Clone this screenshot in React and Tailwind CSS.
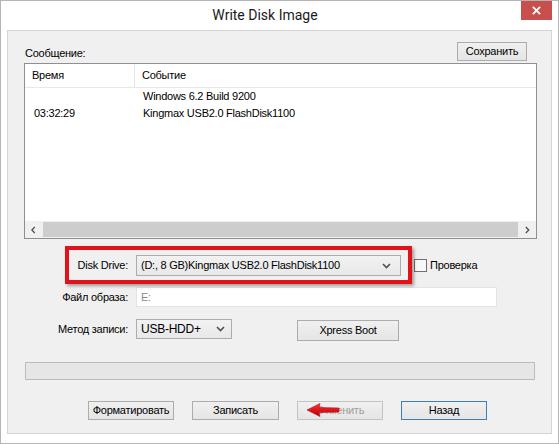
import React from "react";

const Chevron = ({ dir = "down", className = "" }) => {
  const pts = {
    down: "1,1 4.5,4.5 8,1",
    left: "4.5,1 1,4.5 4.5,8",
    right: "1,1 4.5,4.5 1,8",
  }[dir];
  const vb = dir === "down" ? "0 0 9 6" : "0 0 6 9";
  return (
    <svg viewBox={vb} className={className} fill="none">
      <polyline points={pts} stroke="#505050" strokeWidth="1.6" />
    </svg>
  );
};

const Btn = ({ children, className = "", disabled, primary }) => (
  <div
    className={
      "flex items-center justify-center h-[19px] border bg-linear-to-b from-[#f0f0f0] to-[#e5e5e5] text-[11px] " +
      (primary
        ? "border-[#3c7fb1] "
        : disabled
        ? "border-[#c3c3c3] text-[#a0a0a0] "
        : "border-[#acacac] text-black ") +
      className
    }
  >
    {children}
  </div>
);

export default function App() {
  return (
    <div className="w-[559px] h-[444px] bg-white border border-[#b5b5b5] flex flex-col pl-[6px] pr-[6px] pb-[9px] font-['Liberation_Sans',Arial,sans-serif] text-[11px] tracking-[-0.25px] text-black overflow-hidden">
      {/* Title bar */}
      <div className="h-[29px] flex shrink-0">
        <div className="flex-1 flex items-center justify-center pb-[1px] pl-[2px]">
          <span className="font-['Roboto',sans-serif] text-[14px] tracking-normal text-[#1a1a1a]">
            Write Disk Image
          </span>
        </div>
        <div className="w-[31px] h-[19px] bg-[#c7504c] flex items-center justify-center">
          <svg viewBox="0 0 10 10" className="w-[9px] h-[9px]">
            <line x1="1" y1="1" x2="9" y2="9" stroke="white" strokeWidth="2" />
            <line x1="9" y1="1" x2="1" y2="9" stroke="white" strokeWidth="2" />
          </svg>
        </div>
      </div>

      {/* Content */}
      <div className="flex-1 border border-[#d5d5d5] bg-[#f0f0f0] pl-[16px] pt-[11px] flex flex-col">
        {/* Message header */}
        <div className="w-[513px] flex items-center justify-between h-[19px]">
          <span className="pl-[1px] pt-[4px]">Сообщение:</span>
          <Btn className="w-[70px] mr-[10px]">Сохранить</Btn>
        </div>

        {/* List */}
        <div className="mt-[2px] w-[513px] h-[176px] border border-[#8e8f94] bg-white flex flex-col">
          <div className="h-[24px] flex border-b border-[#e8e8e8] shrink-0">
            <div className="w-[110px] border-r border-[#e5e5e5] flex items-center pl-[7px]">Время</div>
            <div className="flex items-center pl-[7px]">Событие</div>
          </div>
          <div className="flex h-[17px] items-center">
            <div className="w-[111px] pl-[9px]"></div>
            <div className="pl-[7px]">Windows 6.2 Build 9200</div>
          </div>
          <div className="flex h-[17px] items-center">
            <div className="w-[111px] pl-[9px]">03:32:29</div>
            <div className="pl-[7px]">Kingmax USB2.0 FlashDisk1100</div>
          </div>
          <div className="flex-1" />
          <div className="h-[17px] flex bg-[#f0f0f0] shrink-0">
            <div className="w-[17px] flex items-center justify-center">
              <Chevron dir="left" className="w-[5px] h-[8px]" />
            </div>
            <div className="flex-1 mx-[1px] my-[1px] bg-[#cdcdcd]" />
            <div className="w-[17px] flex items-center justify-center">
              <Chevron dir="right" className="w-[5px] h-[8px]" />
            </div>
          </div>
        </div>

        {/* Disk Drive row */}
        <div className="relative mt-[16px] h-[21px] flex items-center">
          <div className="absolute left-[41px] top-[-9px] w-[347px] h-[38px] border-[4px] border-[#e2121a] shadow-[2px_2px_3px_rgba(0,0,0,0.35)]" />
          <div className="w-[104px] text-right">Disk Drive:</div>
          <div className="ml-[8px] w-[265px] h-[21px] border border-[#acacac] bg-linear-to-b from-[#f2f2f2] to-[#e8e8e8] flex items-center pl-[4px] pr-[9px]">
            <span className="flex-1">(D:, 8 GB)Kingmax USB2.0 FlashDisk1100</span>
            <Chevron className="w-[9px] h-[6px]" />
          </div>
          <div className="ml-[13px] w-[13px] h-[13px] border border-[#707070] bg-[#f7f7f7]" />
          <span className="ml-[3px]">Проверка</span>
        </div>

        {/* Image file row */}
        <div className="mt-[11px] h-[20px] flex items-center">
          <div className="w-[104px] text-right">Файл образа:</div>
          <div className="ml-[8px] w-[361px] h-[20px] border border-[#e3e3e3] bg-white flex items-center pl-[4px] text-[#8a8a8a]">
            E:
          </div>
        </div>

        {/* Method row */}
        <div className="mt-[12px] h-[22px] flex items-start">
          <div className="w-[104px] h-[20px] flex items-center justify-end">Метод записи:</div>
          <div className="ml-[8px] w-[96px] h-[20px] border border-[#acacac] bg-linear-to-b from-[#f2f2f2] to-[#e8e8e8] flex items-center pl-[4px] pr-[6px]">
            <span className="flex-1 text-[12px]">USB-HDD+</span>
            <Chevron className="w-[9px] h-[6px]" />
          </div>
          <Btn className="ml-[65px] mt-[1px] w-[102px] !h-[21px]">Xpress Boot</Btn>
        </div>

        {/* Progress bar */}
        <div className="mt-[21px] ml-[1px] w-[510px] h-[18px] border border-[#bcbcbc] bg-[#e6e6e6]" />

        {/* Bottom buttons */}
        <div className="mt-[21px] ml-[64px] flex gap-[18px]">
          <Btn className="w-[86px]">Форматировать</Btn>
          <Btn className="w-[87px]">Записать</Btn>
          <div className="relative">
            <Btn disabled className="w-[86px]">Отменить</Btn>
            <svg
              viewBox="0 0 34 16"
              className="absolute left-[9px] top-[1px] w-[34px] h-[16px]"
            >
              <defs>
                <linearGradient id="ar" x1="0" y1="0" x2="0" y2="1">
                  <stop offset="0" stopColor="#ff3b30" />
                  <stop offset="0.5" stopColor="#e0121a" />
                  <stop offset="1" stopColor="#9c0a10" />
                </linearGradient>
              </defs>
              <path
                d="M1 8 L14 1.5 L13 5.5 L33 6 L33 10 L13 10.5 L14 14.5 Z"
                fill="url(#ar)"
                stroke="#b00d13"
                strokeWidth="0.6"
              />
            </svg>
          </div>
          <Btn primary className="w-[86px]">Назад</Btn>
        </div>
      </div>
    </div>
  );
}
